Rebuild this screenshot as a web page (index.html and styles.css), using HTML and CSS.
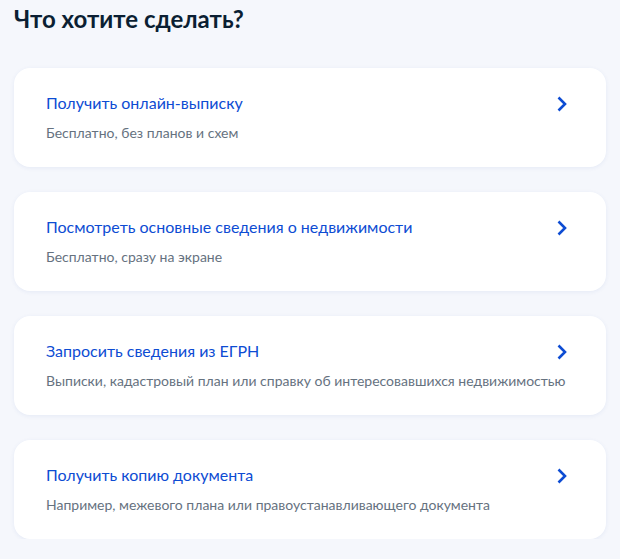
FILE: index.html
```html
<!DOCTYPE html>
<html lang="ru">
<head>
    <meta charset="UTF-8">
    <meta name="viewport" content="width=device-width, initial-scale=1.0">
    <title>Что хотите сделать?</title>
    <link rel="stylesheet" href="styles.css">
</head>
<body>
    <h1 class="page-title">Что хотите сделать?</h1>

    <div class="choice-list">
        <a class="choice-card" href="#">
            <div class="choice-title">Получить онлайн-выписку</div>
            <svg class="chevron" width="12" height="16" viewBox="0 0 12 16"><path d="M2.5 1.5 L9 8 L2.5 14.5" fill="none" stroke="#0d4cd3" stroke-width="2.6"/></svg>
            <div class="choice-desc">Бесплатно, без планов и схем</div>
        </a>
        <a class="choice-card" href="#">
            <div class="choice-title">Посмотреть основные сведения о недвижимости</div>
            <svg class="chevron" width="12" height="16" viewBox="0 0 12 16"><path d="M2.5 1.5 L9 8 L2.5 14.5" fill="none" stroke="#0d4cd3" stroke-width="2.6"/></svg>
            <div class="choice-desc">Бесплатно, сразу на экране</div>
        </a>
        <a class="choice-card" href="#">
            <div class="choice-title">Запросить сведения из ЕГРН</div>
            <svg class="chevron" width="12" height="16" viewBox="0 0 12 16"><path d="M2.5 1.5 L9 8 L2.5 14.5" fill="none" stroke="#0d4cd3" stroke-width="2.6"/></svg>
            <div class="choice-desc">Выписки, кадастровый план или справку об интересовавшихся недвижимостью</div>
        </a>
        <a class="choice-card" href="#">
            <div class="choice-title">Получить копию документа</div>
            <svg class="chevron" width="12" height="16" viewBox="0 0 12 16"><path d="M2.5 1.5 L9 8 L2.5 14.5" fill="none" stroke="#0d4cd3" stroke-width="2.6"/></svg>
            <div class="choice-desc">Например, межевого плана или правоустанавливающего документа</div>
        </a>
    </div>
</body>
</html>
```

FILE: styles.css
```css
body {
    font-family: Lato, 'Noto Sans', sans-serif;
    margin: 0;
    padding: 0 14px;
    background: #f5f7fc;
    color: #0b1f33;
}

.page-title {
    font-size: 24px;
    line-height: 32px;
    font-weight: 700;
    margin: 3px 0 33px;
}

.choice-list {
    display: flex;
    flex-direction: column;
    gap: 25px;
}

.choice-card {
    display: grid;
    grid-template-columns: 1fr auto;
    align-items: start;
    background: #ffffff;
    border-radius: 16px;
    padding: 23px 38px 23px 32px;
    height: 53px;
    text-decoration: none;
    box-shadow: 0 1px 4px rgba(40, 80, 160, 0.08);
}

.choice-title {
    color: #0d4cd3;
    font-size: 16px;
    line-height: 24px;
}

.choice-desc {
    grid-column: 1 / -1;
    color: #66727f;
    font-size: 14px;
    line-height: 20px;
    margin-top: 7px;
    white-space: nowrap;
}

.chevron {
    margin-top: 5px;
}
```
